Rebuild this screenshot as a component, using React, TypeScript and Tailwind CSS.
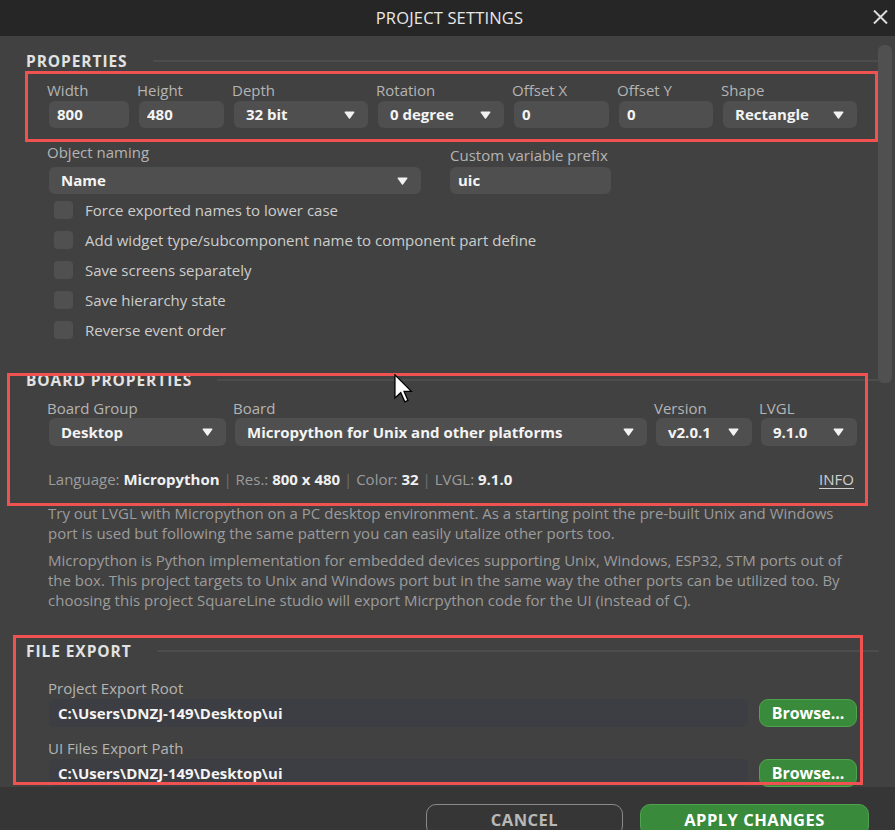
import React from "react";

// small white caret used by every dropdown
function Caret() {
  return (
    <svg width="11" height="8" viewBox="0 0 11 8" className="shrink-0">
      <path d="M1.2 1.2 H9.8 L5.5 7 Z" fill="#f2f2f2" stroke="#f2f2f2" strokeWidth="1.4" strokeLinejoin="round" />
    </svg>
  );
}

interface FieldProps {
  label: string;
  value: string;
  width: string;
  select?: boolean;
}

function Field({ label, value, width, select }: FieldProps) {
  return (
    <div className={`flex flex-col ${width}`}>
      <span className="h-[20px] leading-[20px] text-[15px] text-[#b4b4b4] -ml-[2px]">{label}</span>
      <div
        className={`mt-[1px] h-[27px] rounded-[6px] bg-[#4f4f4f] flex items-center justify-between text-[15px] font-bold text-[#f4f4f4] ${
          select ? "pl-3 pr-[13px]" : "pl-2"
        }`}
      >
        <span className="truncate">{value}</span>
        {select && <Caret />}
      </div>
    </div>
  );
}

function SectionHeader({ title }: { title: string }) {
  return (
    <div className="flex items-center h-[20px] w-[853px] gap-[25px]">
      <span className="text-[15.5px] font-bold tracking-[0.06em] text-[#e2e2e2] leading-[20px] whitespace-nowrap">
        {title}
      </span>
      <div className="flex-1 h-[2px] bg-[#4d4d4d] rounded-full" />
    </div>
  );
}

function Check({ label }: { label: string }) {
  return (
    <div className="h-[30px] flex items-center gap-[12px] pl-[5px]">
      <div className="w-[19px] h-[18px] rounded-[4px] bg-[#505050]" />
      <span className="text-[15px] text-[#cdcdcd]">{label}</span>
    </div>
  );
}

function PathRow({ label, value }: { label: string; value: string }) {
  return (
    <div className="flex flex-col">
      <span className="h-[20px] leading-[20px] text-[15px] text-[#b4b4b4] -ml-[1px]">{label}</span>
      <div className="mt-[1px] flex gap-[11px]">
        <div className="w-[699px] h-[28px] rounded-[6px] bg-[#3d3e43] flex items-center pl-[9px] text-[15px] font-bold text-[#f4f4f4]">
          {value}
        </div>
        <button className="w-[98px] h-[28px] rounded-[9px] bg-[#3a8a3b] border border-[#4fa350] text-[16px] font-bold text-white flex items-center justify-center">
          Browse...
        </button>
      </div>
    </div>
  );
}

export default function App() {
  return (
    <div className="relative w-[895px] h-[830px] overflow-hidden bg-[#414141] flex flex-col font-['Open_Sans','Noto_Sans',sans-serif]">
      {/* Title bar */}
      <div className="relative h-[36px] shrink-0 bg-[#262626] flex items-center justify-center">
        <span className="text-[16.5px] tracking-[0.01em] text-[#e8e8e8] pl-[4px]">PROJECT SETTINGS</span>
        <svg className="absolute right-[7px] top-[10px]" width="15" height="14" viewBox="0 0 15 14">
          <path d="M1 0.5 L14 13.5 M14 0.5 L1 13.5" stroke="#dcdcdc" strokeWidth="2" />
        </svg>
      </div>

      {/* Scroll area */}
      <div className="h-[751px] shrink-0 flex overflow-hidden">
        <div className="w-[878px] shrink-0 pl-[26px] pt-[15px]">
          <SectionHeader title="PROPERTIES" />

          <div className="pl-[23px]">
            <div className="mt-[9px] flex gap-[10px]">
              <Field label="Width" value="800" width="w-[80px]" />
              <Field label="Height" value="480" width="w-[85px]" />
              <Field label="Depth" value="32 bit" width="w-[134px]" select />
              <Field label="Rotation" value="0 degree" width="w-[126px]" select />
              <Field label="Offset X" value="0" width="w-[95px]" />
              <Field label="Offset Y" value="0" width="w-[94px]" />
              <Field label="Shape" value="Rectangle" width="w-[134px]" select />
            </div>

            <div className="mt-[14px] flex gap-[29px]">
              <div className="w-[372px] flex flex-col">
                <span className="h-[20px] leading-[20px] text-[15px] text-[#b4b4b4] -ml-[2px]">Object naming</span>
                <div className="mt-[5px] h-[27px] rounded-[6px] bg-[#4f4f4f] flex items-center justify-between pl-3 pr-[13px] text-[15px] font-bold text-[#f4f4f4]">
                  <span>Name</span>
                  <Caret />
                </div>
              </div>
              <div className="w-[161px] flex flex-col pt-[3px]">
                <span className="h-[20px] leading-[20px] text-[15px] text-[#b4b4b4]">Custom variable prefix</span>
                <div className="mt-[2px] h-[27px] rounded-[6px] bg-[#4f4f4f] flex items-center pl-2 text-[15px] font-bold text-[#f4f4f4]">
                  uic
                </div>
              </div>
            </div>

            <div className="mt-[1px] flex flex-col">
              <Check label="Force exported names to lower case" />
              <Check label="Add widget type/subcomponent name to component part define" />
              <Check label="Save screens separately" />
              <Check label="Save hierarchy state" />
              <Check label="Reverse event order" />
            </div>
          </div>

          <div className="mt-[25px]">
            <SectionHeader title="BOARD PROPERTIES" />
          </div>

          <div className="pl-[23px] w-[831px]">
            <div className="mt-[8px] flex gap-[9px]">
              {[
                { l: "Board Group", v: "Desktop", w: "w-[177px]" },
                { l: "Board", v: "Micropython for Unix and other platforms", w: "w-[412px]" },
                { l: "Version", v: "v2.0.1", w: "w-[96px]" },
                { l: "LVGL", v: "9.1.0", w: "w-[96px]" },
              ].map((b) => (
                <div key={b.l} className={`flex flex-col ${b.w}`}>
                  <span className="h-[20px] leading-[20px] text-[15px] text-[#b4b4b4] -ml-[2px]">{b.l}</span>
                  <div className="h-[28px] rounded-[6px] bg-[#4f4f4f] flex items-center justify-between pl-3 pr-[13px] text-[15px] font-bold text-[#f4f4f4]">
                    <span className="whitespace-nowrap">{b.v}</span>
                    <Caret />
                  </div>
                </div>
              ))}
            </div>

            <div className="mt-[23px] h-[20px] leading-[20px] flex justify-between text-[15px] w-[808px] -ml-[1px]">
              <span className="text-[#9c9c9c]">
                Language: <b className="text-[#f0f0f0]">Micropython</b>
                <span className="text-[#707070]"> | </span>Res.: <b className="text-[#f0f0f0]">800 x 480</b>
                <span className="text-[#707070]"> | </span>Color: <b className="text-[#f0f0f0]">32</b>
                <span className="text-[#707070]"> | </span>LVGL: <b className="text-[#f0f0f0]">9.1.0</b>
              </span>
              <span className="text-[#d0d0d0] underline underline-offset-[3px] pr-[2px]">INFO</span>
            </div>
          </div>

          <div className="pl-[22px] text-[15px] leading-[20px] text-[#9c9c9c]">
            <p className="mt-[14px]">
              Try out LVGL with Micropython on a PC desktop environment. As a starting point the pre-built Unix and Windows
              <br />
              port is used but following the same pattern you can easily utalize other ports too.
            </p>
            <p className="mt-[7px]">
              Micropython is Python implementation for embedded devices supporting Unix, Windows, ESP32, STM ports out of
              <br />
              the box. This project targets to Unix and Windows port but in the same way the other ports can be utilized too. By
              <br />
              choosing this project SquareLine studio will export Micrpython code for the UI (instead of C).
            </p>
          </div>

          <div className="mt-[31px]">
            <SectionHeader title="FILE EXPORT" />
          </div>

          <div className="pl-[23px]">
            <div className="mt-[17px]">
              <PathRow label="Project Export Root" value="C:\Users\DNZJ-149\Desktop\ui" />
            </div>
            <div className="mt-[11px]">
              <PathRow label="UI Files Export Path" value="C:\Users\DNZJ-149\Desktop\ui" />
            </div>
          </div>
        </div>

        {/* Scrollbar */}
        <div className="flex-1 pt-[9px]">
          <div className="w-[14px] h-[338px] rounded-[6px] bg-[#505050]" />
        </div>
      </div>

      {/* Footer */}
      <div className="flex-1 bg-[#363636] flex justify-end gap-[17px] pt-[17px] pr-[26px] overflow-hidden">
        <button className="w-[197px] h-[32px] rounded-[10px] border-[1.5px] border-[#8a8a8a] text-[16.5px] font-bold text-[#b8b8b8] tracking-[0.03em] flex items-center justify-center">
          CANCEL
        </button>
        <button className="w-[229px] h-[32px] rounded-[10px] bg-[#3a8a3b] border border-[#4fa350] text-[16.5px] font-bold text-white tracking-[0.03em] flex items-center justify-center">
          APPLY CHANGES
        </button>
      </div>

      {/* Red annotation frames */}
      <div className="pointer-events-none absolute left-[25px] top-[71px] w-[853px] h-[71px] border-[3px] border-[#f05252]" />
      <div className="pointer-events-none absolute left-[7px] top-[373px] w-[861px] h-[133px] border-[3px] border-[#f05252]" />
      <div className="pointer-events-none absolute left-[13px] top-[635px] w-[850px] h-[150px] border-[3px] border-[#f05252]" />

      {/* Mouse cursor */}
      <svg className="pointer-events-none absolute left-[394px] top-[374px]" width="19" height="29" viewBox="-0.6 -0.6 13 20">
        <path d="M0 0 L0 16 L4 12.3 L6.8 18.6 L9 17.6 L6.3 11.4 L11.3 11.4 Z" fill="#ffffff" stroke="#000000" strokeWidth="0.9" strokeLinejoin="miter" />
      </svg>
    </div>
  );
}
